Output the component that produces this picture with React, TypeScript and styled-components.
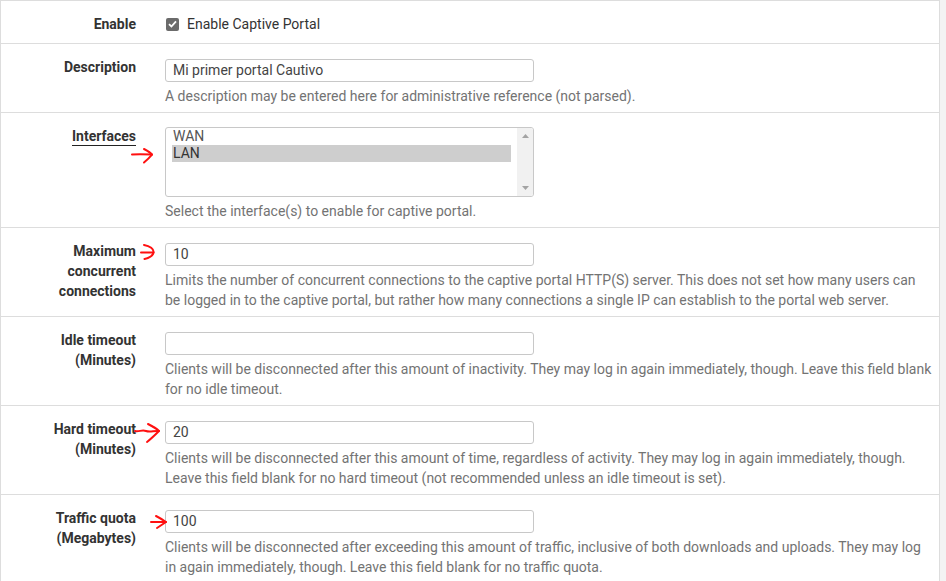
import React from "react";
import styled, { createGlobalStyle } from "styled-components";

const Global = createGlobalStyle`
  html, body { margin: 0; padding: 0; background: #f3f3f3; }
  body { font-family: Roboto, "Noto Sans", Arial, sans-serif; font-size: 14px; color: #333; }
  * { box-sizing: border-box; }
`;

const Page = styled.div`
  position: relative;
  width: 940px;
  background: #fff;
  border-left: 1px solid #ddd;
  border-right: 1px solid #ddd;
  border-top: 1px solid #ddd;
`;

const Row = styled.div`
  display: grid;
  grid-template-columns: 149px 1fr;
  border-bottom: 1px solid #ddd;
`;

const Label = styled.div<{ $underline?: boolean }>`
  text-align: right;
  font-weight: 700;
  line-height: 20px;
  padding: 13px 14px 0 0;
  color: #333;
  span {
    ${(p) => (p.$underline ? "border-bottom: 1px solid #222; padding-bottom: 1px;" : "")}
  }
`;

const Field = styled.div<{ $check?: boolean }>`
  padding: ${(p) => (p.$check ? "13px 6px 9px 15px" : "15px 6px 6px 15px")};
`;

const Input = styled.div`
  width: 369px;
  height: 23px;
  border: 1px solid #c8c8c8;
  border-radius: 3px;
  padding: 0 7px;
  line-height: 21px;
  color: #444;
  font-size: 14px;
`;

const Help = styled.div`
  margin-top: 4px;
  line-height: 20px;
  color: #737373;
  font-size: 14px;
`;

const CheckLine = styled.label`
  display: flex;
  align-items: center;
  gap: 8px;
  line-height: 20px;
  color: #333;
`;

const Box = styled.span`
  width: 13px;
  height: 13px;
  border-radius: 2px;
  background: #6b6b6b;
  display: inline-flex;
  align-items: center;
  justify-content: center;
  margin-left: 1px;
`;

const ListBox = styled.div`
  width: 369px;
  height: 70px;
  border: 1px solid #c8c8c8;
  border-radius: 3px;
  display: flex;
  overflow: hidden;
  margin-top: -1px;
`;

const Options = styled.div`
  flex: 1;
  padding: 0 6px 0 6px;
`;

const Option = styled.div<{ $sel?: boolean }>`
  height: 17px;
  line-height: 17px;
  padding-left: 1px;
  color: ${(p) => (p.$sel ? "#333" : "#555")};
  background: ${(p) => (p.$sel ? "#cecece" : "transparent")};
`;

const Scroll = styled.div`
  width: 16px;
  background: #f1f1f1;
  display: flex;
  flex-direction: column;
  justify-content: space-between;
  align-items: center;
  padding: 6px 0;
`;

const Arrow = styled.svg`
  position: absolute;
  overflow: visible;
  pointer-events: none;
  path {
    stroke: #ff1010;
    stroke-width: 2;
    fill: none;
    stroke-linecap: round;
    stroke-linejoin: round;
  }
`;

const Check = () => (
  <svg width="9" height="8" viewBox="0 0 9 8">
    <path d="M1 4.2 L3.4 6.5 L8 1.3" stroke="#fff" strokeWidth="1.8" fill="none" />
  </svg>
);

export default function App() {
  return (
    <>
      <Global />
      <Page>
        <Row>
          <Label>Enable</Label>
          <Field $check>
            <CheckLine>
              <Box>
                <Check />
              </Box>
              Enable Captive Portal
            </CheckLine>
          </Field>
        </Row>
        <Row>
          <Label>Description</Label>
          <Field>
            <Input>Mi primer portal Cautivo</Input>
            <Help>A description may be entered here for administrative reference (not parsed).</Help>
          </Field>
        </Row>
        <Row>
          <Label $underline>
            <span>Interfaces</span>
          </Label>
          <Field>
            <ListBox>
              <Options>
                <Option>WAN</Option>
                <Option $sel>LAN</Option>
              </Options>
              <Scroll>
                <svg width="7" height="4" viewBox="0 0 7 4">
                  <path d="M0 4 L3.5 0 L7 4Z" fill="#a3a3a3" />
                </svg>
                <svg width="7" height="4" viewBox="0 0 7 4">
                  <path d="M0 0 L3.5 4 L7 0Z" fill="#a3a3a3" />
                </svg>
              </Scroll>
            </ListBox>
            <Help>Select the interface(s) to enable for captive portal.</Help>
          </Field>
        </Row>
        <Row>
          <Label>
            Maximum
            <br />
            concurrent
            <br />
            connections
          </Label>
          <Field>
            <Input>10</Input>
            <Help>
              Limits the number of concurrent connections to the captive portal HTTP(S) server. This does not set how
              many users can be logged in to the captive portal, but rather how many connections a single IP can
              establish to the portal web server.
            </Help>
          </Field>
        </Row>
        <Row>
          <Label>
            Idle timeout
            <br />
            (Minutes)
          </Label>
          <Field>
            <Input />
            <Help>
              Clients will be disconnected after this amount of inactivity. They may log in again immediately, though.
              Leave this field blank for no idle timeout.
            </Help>
          </Field>
        </Row>
        <Row>
          <Label>
            Hard timeout
            <br />
            (Minutes)
          </Label>
          <Field>
            <Input>20</Input>
            <Help>
              Clients will be disconnected after this amount of time, regardless of activity. They may log in again
              immediately, though. Leave this field blank for no hard timeout (not recommended unless an idle timeout is
              set).
            </Help>
          </Field>
        </Row>
        <Row>
          <Label>
            Traffic quota
            <br />
            (Megabytes)
          </Label>
          <Field>
            <Input>100</Input>
            <Help>
              Clients will be disconnected after exceeding this amount of traffic, inclusive of both downloads and
              uploads. They may log in again immediately, though. Leave this field blank for no traffic quota.
            </Help>
          </Field>
        </Row>

        <Arrow style={{ left: 130, top: 146 }} width="24" height="18" viewBox="0 0 24 18">
          <path d="M1 7.5 C7 7.2 14 7.3 21 7.6" />
          <path d="M13 2 C17 4 20 6 21 7.6 C19 10 16 13 13 15.5" />
        </Arrow>
        <Arrow style={{ left: 139, top: 242 }} width="16" height="18" viewBox="0 0 16 18">
          <path d="M1 9.5 L13.5 9.5" />
          <path d="M4 2 C10 3 14 6 13.5 9.5 C13 12.5 9 15 4.5 16" />
        </Arrow>
        <Arrow style={{ left: 133, top: 421 }} width="28" height="22" viewBox="0 0 28 22">
          <path d="M1 9 C5 10 8 7.5 12 9 C16 10.5 20 8.5 25 9" />
          <path d="M14 2 C18 4 22 6 25 9 C22 12 18 16 13 20" />
        </Arrow>
        <Arrow style={{ left: 149, top: 513 }} width="18" height="16" viewBox="0 0 18 16">
          <path d="M1 8 L16 8" />
          <path d="M6 2 C10 4 13 6 16 8 C13 10 10 12 7 14" />
        </Arrow>
      </Page>
    </>
  );
}
